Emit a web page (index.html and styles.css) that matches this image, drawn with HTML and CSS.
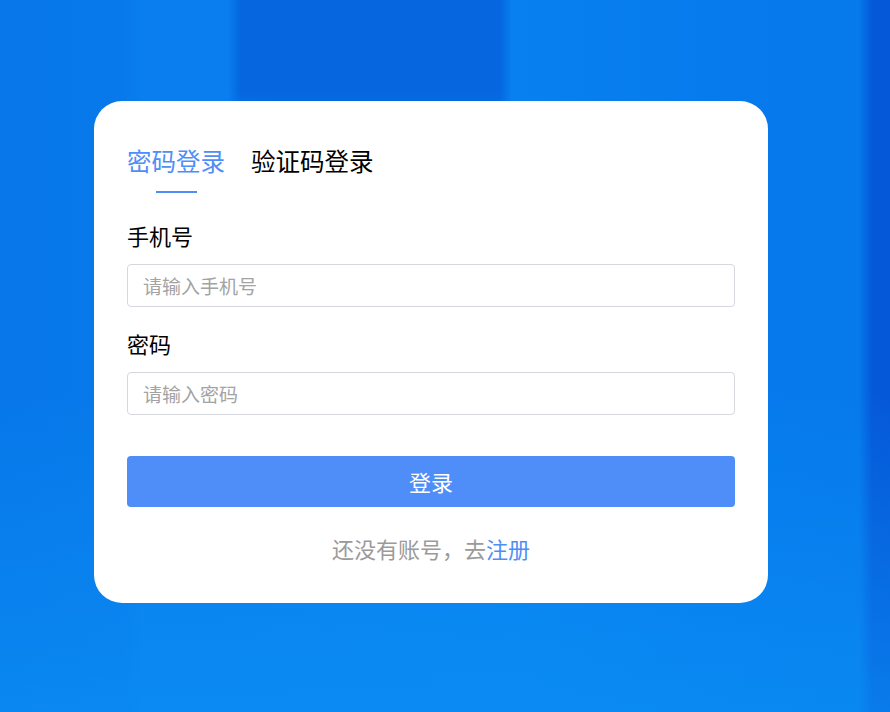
FILE: index.html
```html
<!DOCTYPE html>
<html lang="zh-CN">
<head>
    <meta charset="UTF-8">
    <meta name="viewport" content="width=device-width, initial-scale=1.0">
    <title>登录</title>
    <link rel="stylesheet" href="styles.css">
</head>
<body>
    <div class="page">
        <form class="card">
            <div class="tabs">
                <div class="tab active">
                    <span>密码登录</span>
                    <i class="tab-bar"></i>
                </div>
                <div class="tab">
                    <span>验证码登录</span>
                </div>
            </div>

            <label class="field-label" for="phone">手机号</label>
            <input class="field-input" id="phone" type="text" placeholder="请输入手机号">

            <label class="field-label second" for="pwd">密码</label>
            <input class="field-input" id="pwd" type="password" placeholder="请输入密码">

            <button class="submit" type="button">登录</button>

            <div class="footer">还没有账号，去<a href="#">注册</a></div>
        </form>
    </div>
</body>
</html>
```

FILE: styles.css
```css
html, body {
    margin: 0;
    height: 100%;
}
body {
    font-family: "Noto Sans CJK SC", "Noto Sans", sans-serif;
    background-color: #077aec;
    background-image:
        /* lighter glow towards the bottom */
        linear-gradient(180deg, rgba(10, 142, 244, 0) 0, rgba(10, 142, 244, 0) 55%, rgba(12, 146, 246, 0.6) 100%),
        /* darker block at the top middle */
        linear-gradient(90deg, rgba(10, 126, 238, 0.9) 0, rgba(10, 126, 238, 0) 4%, rgba(8, 128, 239, 0) 96%, rgba(8, 128, 239, 0.9) 100%),
        linear-gradient(180deg, #0566e0 0, #0566e0 60%, rgba(5, 102, 224, 0) 100%),
        linear-gradient(90deg, #0777e9 0, #0879ea 14%, #0a7eee 16%, #0a7eee 25%, #0880ef 58%, #067bed 80%, #0679eb 96.5%, #0559d9 98%, #0558d8 100%);
    background-size: 100% 100%, 282px 150px, 282px 150px, 100% 100%;
    background-position: 0 0, 229px 0, 229px 0, 0 0;
    background-repeat: no-repeat;
}
.page {
    box-sizing: border-box;
    height: 100%;
    padding: 101px 0 0 94px;
}
.card {
    box-sizing: border-box;
    width: 674px;
    height: 502px;
    background: #fff;
    border-radius: 28px;
    padding: 44px 33px 0;
    display: flex;
    flex-direction: column;
}
.tabs {
    display: flex;
    gap: 26px;
    height: 48px;
}
.tab {
    display: flex;
    flex-direction: column;
    align-items: center;
    font-size: 24.5px;
    line-height: 32px;
    color: #000;
}
.tab.active {
    color: #4f8ef7;
}
.tab-bar {
    width: 41px;
    height: 2px;
    margin-top: 14px;
    background: #4f8ef7;
}
.field-label {
    margin-top: 27px;
    font-size: 22px;
    line-height: 30px;
    color: #000;
}
.field-label.second {
    margin-top: 21px;
}
.field-input {
    box-sizing: border-box;
    margin-top: 14px;
    width: 100%;
    height: 43px;
    padding: 0 15px;
    border: 1px solid #d6d8dd;
    border-radius: 4px;
    font-family: inherit;
    font-size: 19px;
    color: #333;
    outline: none;
}
.field-input::placeholder {
    color: #a3a3a3;
}
.submit {
    margin-top: 41px;
    height: 51px;
    padding: 0 0 2px;
    border: none;
    border-radius: 4px;
    background: #4f8ef9;
    color: #fff;
    font-family: inherit;
    font-size: 22px;
}
.footer {
    margin-top: 26px;
    text-align: center;
    font-size: 22px;
    line-height: 30px;
    color: #9a9a9a;
}
.footer a {
    color: #4f8ef7;
    text-decoration: none;
}
```
